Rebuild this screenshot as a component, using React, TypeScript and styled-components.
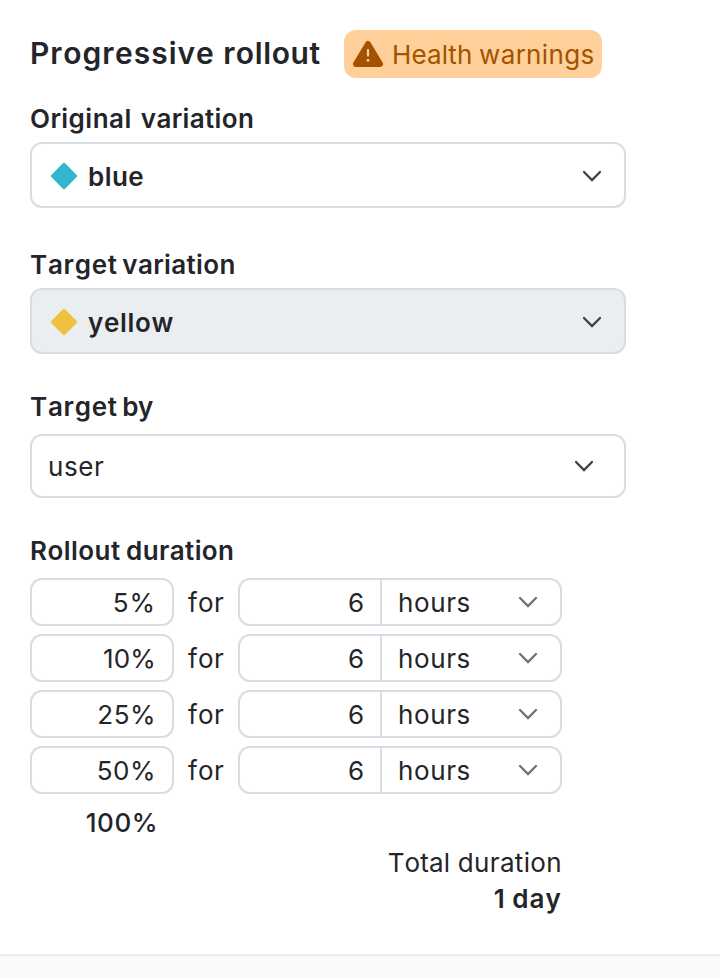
import React from "react";
import styled, { createGlobalStyle, css } from "styled-components";

const GlobalStyle = createGlobalStyle`
  *, *::before, *::after { box-sizing: border-box; }
  html, body { margin: 0; padding: 0; background: #fff; overflow: hidden; }
  body {
    font-family: Inter, "Liberation Sans", sans-serif;
    color: #23252a;
  }
  svg { flex: none; }
`;

const Page = styled.main`
  display: flex;
  flex-direction: column;
  width: 720px;
  height: 978px;
  font-size: 26px;
  font-kerning: none;
`;

const Form = styled.section`
  flex: 0 0 954px;
  padding: 30px 0 0 30px;
`;

const Footer = styled.footer`
  flex: 1;
  border-top: 2px solid #e9edf0;
  background: #f7f9fb;
`;

const Header = styled.header`
  display: flex;
  align-items: center;
  height: 48px;
`;

const Title = styled.h2`
  width: 314px;
  height: 48px;
  margin: 0;
  font-size: 30px;
  font-weight: 600;
  line-height: 46px;
  white-space: nowrap;
`;

const Badge = styled.span`
  display: inline-flex;
  align-items: center;
  gap: 8px;
  width: 258px;
  height: 48px;
  padding: 0 8px;
  border-radius: 12px;
  background: #ffd099;
  color: #a35200;
`;

const Line = styled.span`
  display: block;
  height: 36px;
  line-height: 38px;
  white-space: nowrap;
`;

const Phrase = styled.span<{ $space: number }>`
  word-spacing: ${(p) => p.$space}px;
`;

const Word = styled.span<{ $tracking: number }>`
  letter-spacing: ${(p) => p.$tracking}px;
`;

const Field = styled.div<{ $top: number }>`
  margin-top: ${(p) => p.$top}px;
`;

const Label = styled(Line)<{ $gap?: number }>`
  margin-bottom: ${(p) => p.$gap ?? 6}px;
  font-weight: 600;
`;

const frame = css`
  border: 2px solid #d8dde3;
  border-radius: 12px;
  background: #fff;
`;

const SelectBox = styled.div<{ $filled?: boolean; $plain?: boolean }>`
  ${frame}
  display: flex;
  align-items: center;
  justify-content: space-between;
  width: 596px;
  height: ${(p) => (p.$plain ? 64 : 66)}px;
  padding: ${(p) => (p.$plain ? "0 28px 0 16px" : "2px 20px 0 18px")};
  font-weight: ${(p) => (p.$plain ? 400 : 600)};
  ${(p) => p.$filled && "background: #ebeef1;"}
`;

const Value = styled.span`
  display: flex;
  align-items: center;
  gap: 10px;
`;

const Steps = styled.div`
  display: flex;
  flex-direction: column;
  gap: 8px;
`;

const Step = styled.div`
  display: flex;
  align-items: center;
  height: 48px;
`;

const Percent = styled.div`
  ${frame}
  width: 144px;
  height: 48px;
  padding-right: 16px;
  line-height: 46px;
  text-align: right;
`;

const For = styled(Line)`
  width: 64px;
  padding-left: 14px;
`;

const Duration = styled.div`
  ${frame}
  display: flex;
  width: 324px;
  height: 48px;
`;

const Amount = styled.div`
  width: 142px;
  height: 44px;
  padding-right: 16px;
  border-right: 2px solid #d8dde3;
  line-height: 46px;
  text-align: right;
`;

const Unit = styled.div`
  display: flex;
  flex: 1;
  align-items: center;
  justify-content: space-between;
  padding: 0 20px 0 16px;
`;

const FinalPercent = styled(Line)`
  width: 128px;
  margin-top: 10px;
  font-weight: 500;
  text-align: right;
`;

const Total = styled.div`
  width: 532px;
  margin-top: 4px;
  text-align: right;
`;

const Strong = styled(Line)`
  font-weight: 600;
`;

const Text = ({ words, space = 0 }: { words: [string, number][]; space?: number }) => (
  <Phrase $space={space}>
    {words.map(([word, tracking], i) => (
      <React.Fragment key={word}>
        {i > 0 && " "}
        <Word $tracking={tracking}>{word}</Word>
      </React.Fragment>
    ))}
  </Phrase>
);

const Chevron = ({ color = "#3d414a" }: { color?: string }) => (
  <svg width="24" height="24" viewBox="0 0 24 24" fill="none">
    <path d="M4 8l8 8 8-8" stroke={color} strokeWidth="2.3" strokeLinecap="round" strokeLinejoin="miter" />
  </svg>
);

const Diamond = ({ color }: { color: string }) => (
  <svg width="28" height="28" viewBox="0 0 28 28">
    <path d="M14 2.4 25.6 14 14 25.6 2.4 14Z" fill={color} stroke={color} strokeWidth="3" strokeLinejoin="round" />
  </svg>
);

const Warning = () => (
  <svg width="32" height="32" viewBox="0 0 32 32">
    <path d="M16 6 28 26H4Z" fill="#a35200" stroke="#a35200" strokeWidth="6" strokeLinejoin="round" />
    <path d="M16 12.2v5.4" stroke="#ffd099" strokeWidth="2.2" strokeLinecap="round" />
    <circle cx="16" cy="22.3" r="1.4" fill="#ffd099" />
  </svg>
);

const steps = [
  { label: "5%", tracking: 1 },
  { label: "10%", tracking: 0.2 },
  { label: "25%", tracking: 0.5 },
  { label: "50%", tracking: 0.5 },
];

export default function App() {
  return (
    <>
      <GlobalStyle />
      <Page>
        <Form>
          <Header>
            <Title>
              <Text words={[["Progressive", 0.97], ["rollout", 0.63]]} space={0.9} />
            </Title>
            <Badge>
              <Warning />
              <Line>
                <Text words={[["Health", 0.2], ["warnings", 0.4]]} space={-0.7} />
              </Line>
            </Badge>
          </Header>
          <Field $top={22}>
            <Label>
              <Text words={[["Original", 0.5], ["variation", 0.4]]} space={2.4} />
            </Label>
            <SelectBox>
              <Value>
                <Diamond color="#34b5ce" />
                <Line>
                  <Text words={[["blue", 0.45]]} />
                </Line>
              </Value>
              <Chevron />
            </SelectBox>
          </Field>
          <Field $top={38}>
            <Label>
              <Text words={[["Target", 0.75], ["variation", 0.4]]} space={-2} />
            </Label>
            <SelectBox $filled>
              <Value>
                <Diamond color="#ecc23f" />
                <Line>
                  <Text words={[["yellow", 0.68]]} />
                </Line>
              </Value>
              <Chevron />
            </SelectBox>
          </Field>
          <Field $top={34}>
            <Label $gap={10}>
              <Text words={[["Target", 0.75], ["by", -0.5]]} space={-2} />
            </Label>
            <SelectBox $plain>
              <Line>
                <Text words={[["user", 0.6]]} />
              </Line>
              <Chevron />
            </SelectBox>
          </Field>
          <Field $top={34}>
            <Label $gap={10}>
              <Text words={[["Rollout", 0.47], ["duration", 0.4]]} space={-1.1} />
            </Label>
            <Steps>
              {steps.map((step) => (
                <Step key={step.label}>
                  <Percent>
                    <Text words={[[step.label, step.tracking]]} />
                  </Percent>
                  <For>
                    <Text words={[["for", 0.4]]} />
                  </For>
                  <Duration>
                    <Amount>6</Amount>
                    <Unit>
                      <Line>
                        <Text words={[["hours", 0.6]]} />
                      </Line>
                      <Chevron color="#6c727a" />
                    </Unit>
                  </Duration>
                </Step>
              ))}
            </Steps>
            <FinalPercent>
              <Text words={[["100%", 0.5]]} />
            </FinalPercent>
            <Total>
              <Line>
                <Text words={[["Total", 0.13], ["duration", 0.35]]} space={0.3} />
              </Line>
              <Strong>
                <Text words={[["1", 0], ["day", 1.1]]} space={1} />
              </Strong>
            </Total>
          </Field>
        </Form>
        <Footer />
      </Page>
    </>
  );
}
